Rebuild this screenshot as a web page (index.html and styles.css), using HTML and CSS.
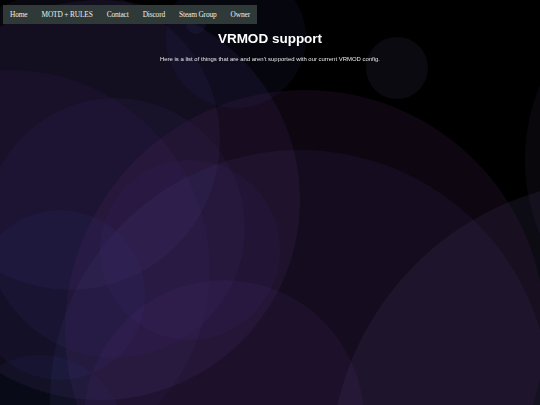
FILE: index.html
```html
<!DOCTYPE html>
<html lang="en">
<head>
    <meta charset="UTF-8">
    <meta name="viewport" content="width=device-width, initial-scale=1.0">
    <title>VRMOD support</title>
    <link rel="stylesheet" href="styles.css">
</head>
<body>
    <!-- decorative bubbles behind the page -->
    <svg class="bubbles" viewBox="0 0 540 405" preserveAspectRatio="none" aria-hidden="true">
        <circle cx="70" cy="140" r="150" fill="#4a3c80" fill-opacity="0.12"/>
        <circle cx="10" cy="270" r="200" fill="#3c3470" fill-opacity="0.10"/>
        <circle cx="100" cy="200" r="200" fill="#6a48b0" fill-opacity="0.11"/>
        <circle cx="115" cy="228" r="130" fill="#5a48b0" fill-opacity="0.07"/>
        <circle cx="236" cy="38" r="70" fill="#3c3c90" fill-opacity="0.10"/>
        <circle cx="196" cy="24" r="10" fill="#5050a8" fill-opacity="0.10"/>
        <circle cx="397" cy="68" r="31" fill="#3a3656" fill-opacity="0.18"/>
        <circle cx="305" cy="330" r="240" fill="#6a3278" fill-opacity="0.13"/>
        <circle cx="300" cy="400" r="250" fill="#46448a" fill-opacity="0.12"/>
        <circle cx="620" cy="470" r="290" fill="#4a3c70" fill-opacity="0.18"/>
        <circle cx="720" cy="160" r="195" fill="#584878" fill-opacity="0.10"/>
        <circle cx="60" cy="295" r="85" fill="#3448a8" fill-opacity="0.09"/>
        <circle cx="40" cy="440" r="85" fill="#3448a8" fill-opacity="0.08"/>
        <circle cx="224" cy="420" r="140" fill="#6a34a8" fill-opacity="0.09"/>
        <circle cx="190" cy="250" r="90" fill="#6644b8" fill-opacity="0.06"/>
    </svg>

    <nav class="topnav">
        <a href="#">Home</a>
        <a href="#">MOTD + RULES</a>
        <a href="#">Contact</a>
        <a href="#">Discord</a>
        <a href="#">Steam Group</a>
        <a href="#">Owner</a>
    </nav>

    <main class="content">
        <h1>VRMOD support</h1>
        <p>Here is a list of things that are and aren't supported with our current VRMOD config.</p>
    </main>
</body>
</html>
```

FILE: styles.css
```css
body {
    margin: 0;
    padding: 3px;
    min-height: 100vh;
    box-sizing: border-box;
    background-color: #000;
    color: #eee;
    font-family: "Liberation Sans", Arial, sans-serif;
    overflow: hidden;
}

.bubbles {
    position: fixed;
    top: 0;
    left: 0;
    width: 100%;
    height: 100%;
    z-index: 0;
}

.topnav {
    position: relative;
    z-index: 1;
    display: inline-flex;
    height: 19px;
    align-items: center;
    background-color: #2f3a38;
}

.topnav a {
    padding: 0 7px;
    color: #eceeea;
    text-decoration: none;
    font-family: "Liberation Serif", "Times New Roman", serif;
    font-size: 7.4px;
    letter-spacing: -0.15px;
}

.content {
    position: relative;
    z-index: 1;
    text-align: center;
}

.content h1 {
    margin: 7px 0 0;
    font-size: 13.5px;
    font-weight: bold;
    color: #fff;
}

.content p {
    margin: 10px 0 0;
    font-size: 5.95px;
    color: #e8e8e8;
}
```
